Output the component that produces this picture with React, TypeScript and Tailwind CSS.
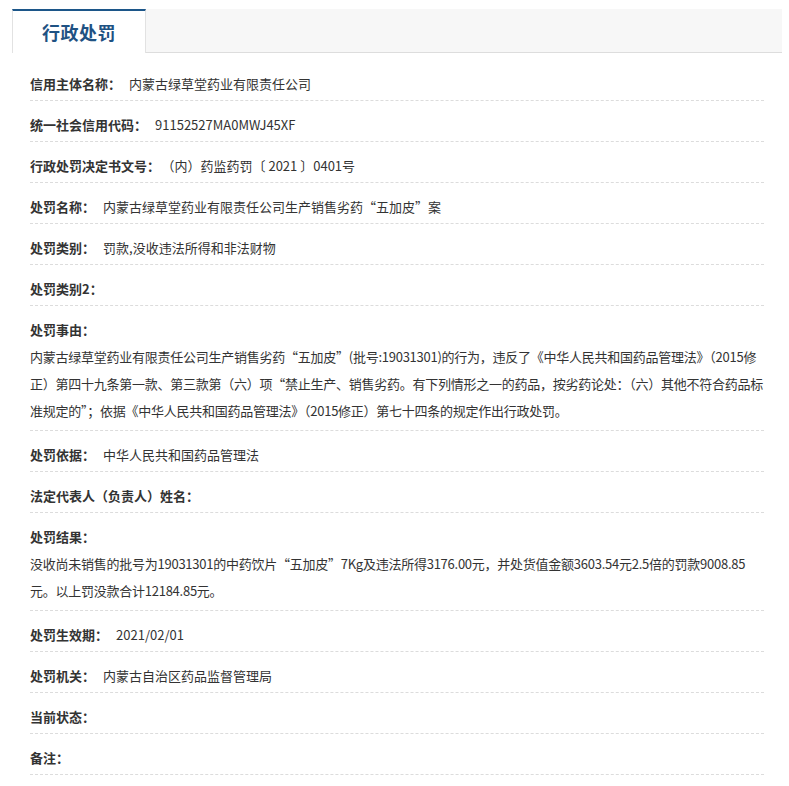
import React from 'react';

type Row = { label: string; value?: string; block?: boolean };

const rows: Row[] = [
  { label: '信用主体名称', value: '内蒙古绿草堂药业有限责任公司' },
  { label: '统一社会信用代码', value: '91152527MA0MWJ45XF' },
  { label: '行政处罚决定书文号', value: '（内）药监药罚〔 2021 〕0401号' },
  { label: '处罚名称', value: '内蒙古绿草堂药业有限责任公司生产销售劣药“五加皮”案' },
  { label: '处罚类别', value: '罚款,没收违法所得和非法财物' },
  { label: '处罚类别2' },
  {
    label: '处罚事由',
    block: true,
    value:
      '内蒙古绿草堂药业有限责任公司生产销售劣药“五加皮”(批号:19031301)的行为，违反了《中华人民共和国药品管理法》（2015修正）第四十九条第一款、第三款第（六）项“禁止生产、销售劣药。有下列情形之一的药品，按劣药论处：（六）其他不符合药品标准规定的”；依据《中华人民共和国药品管理法》（2015修正）第七十四条的规定作出行政处罚。',
  },
  { label: '处罚依据', value: '中华人民共和国药品管理法' },
  { label: '法定代表人（负责人）姓名' },
  {
    label: '处罚结果',
    block: true,
    value:
      '没收尚未销售的批号为19031301的中药饮片“五加皮”7Kg及违法所得3176.00元，并处货值金额3603.54元2.5倍的罚款9008.85元。以上罚没款合计12184.85元。',
  },
  { label: '处罚生效期', value: '2021/02/01' },
  { label: '处罚机关', value: '内蒙古自治区药品监督管理局' },
  { label: '当前状态' },
  { label: '备注' },
];

export default function App() {
  return (
    <div
      className="bg-white min-h-[786px] pt-[9px] text-[#333]"
      style={{ fontFamily: '"Microsoft YaHei", "Noto Sans CJK SC", "Liberation Sans", sans-serif' }}
    >
      <div className="ml-[12px] mr-[7px] h-[44px] flex bg-[#f7f7f7] border-b border-[#dddddd]">
        <div className="w-[134px] h-[44px] bg-white border-t-2 border-t-[#1c5689] border-x border-x-[#e2e2e2] flex items-center justify-center">
          <span className="text-[18px] font-bold text-[#1f5283] tracking-[0.5px]">行政处罚</span>
        </div>
      </div>

      <div className="ml-[30px] mr-[25px] mt-[7px] text-[13px]">
        {rows.map((r) => (
          <div
            key={r.label}
            className={`pt-[10px] leading-[27px] border-b border-dashed border-[#dcdcdc] ${r.block ? 'pb-[6px]' : 'pb-[3px]'}`}
          >
            <span className="font-bold">{r.label}：</span>
            {r.value && !r.block && <span className="ml-[8px]">{r.value}</span>}
            {r.value && r.block && <div className="tracking-[-0.25px] break-all">{r.value}</div>}
          </div>
        ))}
      </div>
    </div>
  );
}
